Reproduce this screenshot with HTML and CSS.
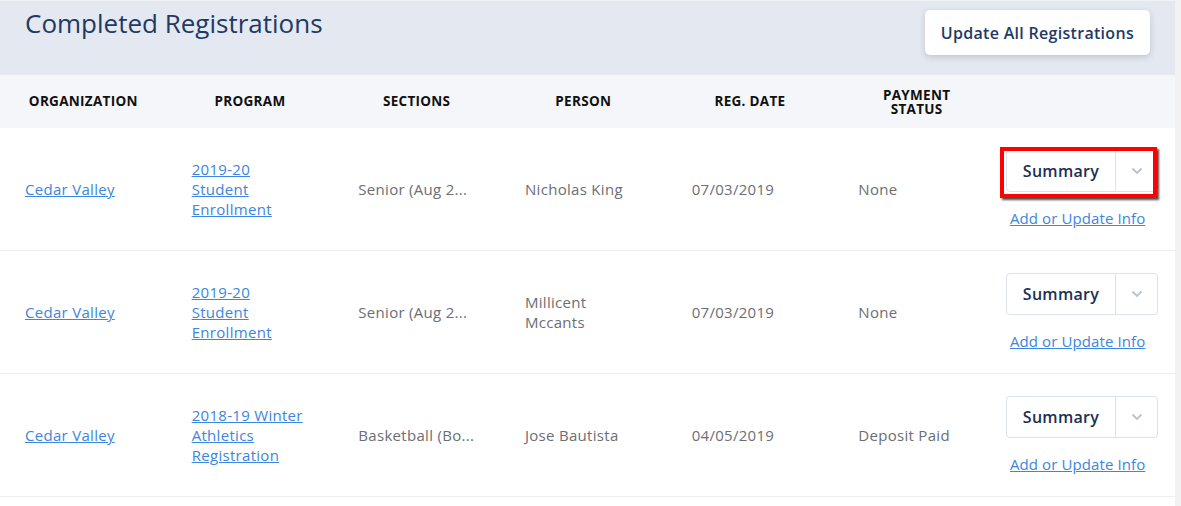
FILE: index.html
```html
<!DOCTYPE html>
<html lang="en">
	<head>
		<meta charset="utf-8">
		<meta name="viewport" content="width=device-width, initial-scale=1.0">
		<title>Completed Registrations</title>
		<link rel="stylesheet" href="styles.css">
	</head>
	<body>
		<div class="page">
			<div class="top-bar">
				<h1>Completed Registrations</h1>
				<button class="update-all">Update All Registrations</button>
			</div>
			<table class="registrations">
				<thead>
					<tr>
						<th>Organization</th>
						<th>Program</th>
						<th>Sections</th>
						<th>Person</th>
						<th>Reg. Date</th>
						<th class="two-line"><span>Payment</span><span>Status</span></th>
						<th class="actions-col"></th>
					</tr>
				</thead>
				<tbody>
					<tr>
						<td><a href="#">Cedar Valley</a></td>
						<td><a href="#">2019-20 Student Enrollment</a></td>
						<td class="truncate">Senior (Aug 2...</td>
						<td>Nicholas King</td>
						<td>07/03/2019</td>
						<td>None</td>
						<td class="actions">
							<div class="split-button highlighted">
								<button class="split-main">Summary</button>
								<button class="split-toggle">
									<svg width="12" height="8" viewBox="0 0 12 8"><path d="M1.5 1.5 L6 6 L10.5 1.5" fill="none" stroke="#b9c2cf" stroke-width="1.8"/></svg>
								</button>
							</div>
							<a href="#">Add or Update Info</a>
						</td>
					</tr>
					<tr>
						<td><a href="#">Cedar Valley</a></td>
						<td><a href="#">2019-20 Student Enrollment</a></td>
						<td class="truncate">Senior (Aug 2...</td>
						<td>Millicent Mccants</td>
						<td>07/03/2019</td>
						<td>None</td>
						<td class="actions">
							<div class="split-button">
								<button class="split-main">Summary</button>
								<button class="split-toggle">
									<svg width="12" height="8" viewBox="0 0 12 8"><path d="M1.5 1.5 L6 6 L10.5 1.5" fill="none" stroke="#b9c2cf" stroke-width="1.8"/></svg>
								</button>
							</div>
							<a href="#">Add or Update Info</a>
						</td>
					</tr>
					<tr>
						<td><a href="#">Cedar Valley</a></td>
						<td><a href="#">2018-19 Winter Athletics Registration</a></td>
						<td class="truncate">Basketball (Bo...</td>
						<td>Jose Bautista</td>
						<td>04/05/2019</td>
						<td>Deposit Paid</td>
						<td class="actions">
							<div class="split-button">
								<button class="split-main">Summary</button>
								<button class="split-toggle">
									<svg width="12" height="8" viewBox="0 0 12 8"><path d="M1.5 1.5 L6 6 L10.5 1.5" fill="none" stroke="#b9c2cf" stroke-width="1.8"/></svg>
								</button>
							</div>
							<a href="#">Add or Update Info</a>
						</td>
					</tr>
				</tbody>
			</table>
		</div>
	</body>
</html>
```

FILE: styles.css
```css
body {
	margin: 0;
	font-family: 'Open Sans', 'Lato', sans-serif;
	background-color: #f2f2f2;
	overflow: hidden;
}
.page {
	width: 1175px;
	background-color: #ffffff;
	min-height: 506px;
	border-top: 1px solid #f0f2f6;
}
.top-bar {
	display: flex;
	justify-content: space-between;
	align-items: flex-start;
	height: 74px;
	background-color: #e4e8f0;
	padding: 0 25px 0 25px;
}
h1 {
	margin: 4px 0 0 0;
	font-size: 26px;
	font-weight: 400;
	color: #1f3a63;
}
.update-all {
	margin-top: 9px;
	height: 45px;
	padding: 0 16px;
	background-color: #ffffff;
	border: none;
	border-radius: 5px;
	box-shadow: 0 2px 6px rgba(40, 50, 70, 0.2);
	font-family: inherit;
	font-size: 16px;
	font-weight: 600;
	letter-spacing: 0.3px;
	color: #1f3a63;
	cursor: pointer;
}
.registrations {
	width: 1175px;
	table-layout: fixed;
	border-collapse: collapse;
}
.registrations th {
	width: 166.66px;
	height: 53px;
	background-color: #f4f6fa;
	font-size: 13.5px;
	font-weight: 700;
	letter-spacing: 0.3px;
	text-transform: uppercase;
	color: #111111;
	line-height: 15px;
	text-align: center;
	padding: 0;
}
.registrations th.two-line span {
	display: block;
	height: 14px;
	line-height: 14px;
	overflow: visible;
}
.registrations th.actions-col {
	width: auto;
}
.registrations td {
	height: 122px;
	padding: 0 28px 0 25px;
	border-bottom: 1px solid #eceef1;
	font-size: 15px;
	letter-spacing: 0.3px;
	line-height: 20px;
	color: #6b6e73;
	vertical-align: middle;
}
.registrations td.truncate {
	white-space: nowrap;
}
.registrations a {
	color: #3c85e0;
	text-decoration: underline;
}
.registrations td.actions {
	padding: 0 17px 0 6px;
	position: relative;
}
.split-button {
	display: flex;
	height: 40px;
	border: 1px solid #dde2ea;
	border-radius: 4px;
	margin-bottom: 16px;
	background-color: #ffffff;
}
.split-main {
	flex: 1;
	border: none;
	background: none;
	font-family: inherit;
	font-size: 16px;
	font-weight: 600;
	letter-spacing: 0.3px;
	color: #1b2f52;
	cursor: pointer;
}
.split-toggle {
	width: 42px;
	border: none;
	border-left: 1px solid #dde2ea;
	background: none;
	cursor: pointer;
	display: flex;
	align-items: center;
	justify-content: center;
}
.highlighted::after {
	content: "";
	position: absolute;
	left: 0;
	top: 19px;
	width: 149px;
	height: 43px;
	border: 4px solid #ff0000;
	box-shadow: 2px 2px 2px rgba(0, 0, 0, 0.7);
}
.actions a {
	display: block;
	padding-left: 4px;
	letter-spacing: 0.1px;
}
```
